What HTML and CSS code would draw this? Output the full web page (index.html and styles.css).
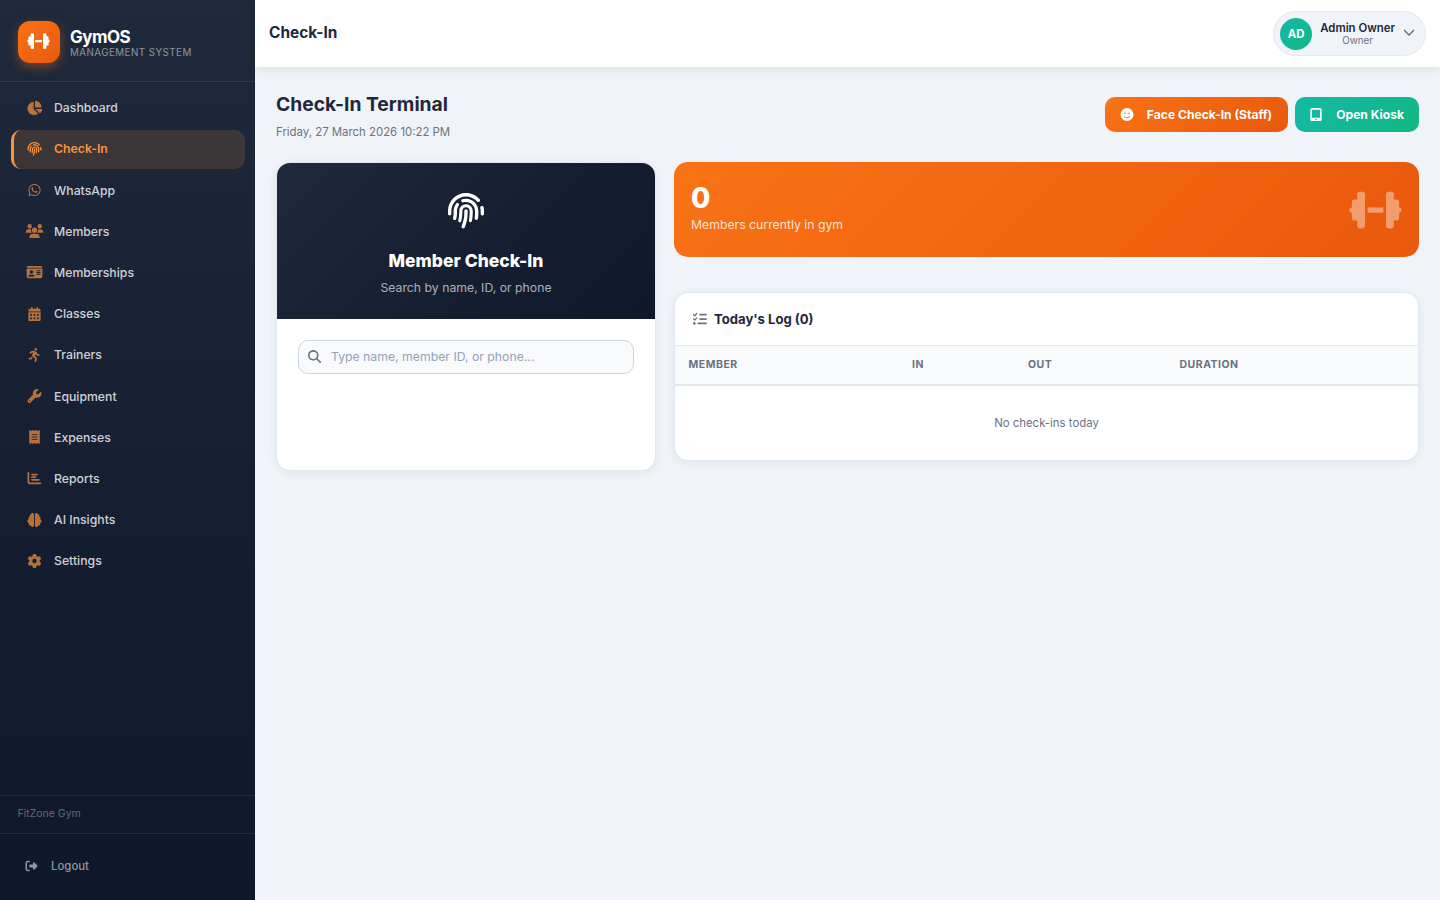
FILE: index.html
```html
<!DOCTYPE html>
<html lang="en">
<head>
    <meta charset="UTF-8">
    <meta name="viewport" content="width=device-width, initial-scale=1.0">
    <title>Check-In - GymOS</title>
    <link rel="stylesheet" href="styles.css">
</head>
<body>
<svg class="icon-sprite" xmlns="http://www.w3.org/2000/svg">
    <symbol id="dumbbell" viewBox="0 0 640 512"><path d="M96 64c0-17.7 14.3-32 32-32h32c17.7 0 32 14.3 32 32V448c0 17.7-14.3 32-32 32H128c-17.7 0-32-14.3-32-32V384H64c-17.7 0-32-14.3-32-32V288c-17.7 0-32-14.3-32-32s14.3-32 32-32V160c0-17.7 14.3-32 32-32H96V64zm448 0v64h32c17.7 0 32 14.3 32 32v64c17.7 0 32 14.3 32 32s-14.3 32-32 32v64c0 17.7-14.3 32-32 32H544v64c0 17.7-14.3 32-32 32H480c-17.7 0-32-14.3-32-32V64c0-17.7 14.3-32 32-32h32c17.7 0 32 14.3 32 32zM416 224v64H224V224H416z"/></symbol>
    <symbol id="chart-pie" viewBox="0 0 576 512"><path d="M304 240V16.6c0-9 7-16.6 16-16.6C443.7 0 544 100.3 544 224c0 9-7.6 16-16.6 16H304zM32 272C32 150.7 122.1 50.3 239 34.3c9.2-1.3 17 6.1 17 15.4V288L412.5 444.5c6.7 6.7 6.2 17.7-1.5 23.1C371.8 495.6 323.8 512 272 512C139.5 512 32 404.6 32 272zm526.4 16c9.3 0 16.6 7.8 15.4 17c-7.7 55.9-34.6 105.6-73.9 142.3c-6 5.6-15.4 5.2-21.2-.7L320 288H558.4z"/></symbol>
    <symbol id="fingerprint" viewBox="0 0 512 512"><path d="M48 256C48 141.1 141.1 48 256 48c63.1 0 119.6 28.1 157.8 72.5c8.6 10.1 23.8 11.2 33.8 2.6s11.2-23.8 2.6-33.8C403.3 34.6 333.7 0 256 0C114.6 0 0 114.6 0 256v40c0 13.3 10.7 24 24 24s24-10.7 24-24V256zm458.5-52.9c-2.7-13-15.5-21.3-28.4-18.5s-21.3 15.5-18.5 28.4c2.9 13.9 4.5 28.3 4.5 43.1v40c0 13.3 10.7 24 24 24s24-10.7 24-24V256c0-18.1-1.9-35.8-5.5-52.9zM256 80c-19 0-37.4 3-54.5 8.6c-15.2 5-18.7 23.7-8.3 35.9c7.1 8.3 18.8 10.8 29.4 7.9c10.6-2.9 21.8-4.4 33.4-4.4c70.7 0 128 57.3 128 128v24.9c0 25.2-1.5 50.3-4.4 75.3c-1.7 14.6 9.4 27.8 24.2 27.8c11.8 0 21.9-8.6 23.3-20.3c3.3-27.4 5-55 5-82.7V256c0-97.2-78.8-176-176-176zM150.7 148.7c-9.1-10.6-25.3-11.4-33.9-.4C93.7 178 80 215.4 80 256v24.9c0 24.2-2.6 48.4-7.8 71.9C68.8 368.4 80.1 384 96.1 384c10.5 0 19.9-7 22.2-17.3c6.4-28.1 9.7-56.8 9.7-85.8V256c0-27.2 8.5-52.4 22.9-73.1c7.2-10.4 8-24.6-.2-34.2zM256 160c-53 0-96 43-96 96v24.9c0 35.9-4.6 71.5-13.8 106.1c-3.8 14.3 6.7 29 21.5 29c9.5 0 17.9-6.2 20.4-15.4c10.5-39 15.9-79.2 15.9-119.7V256c0-28.7 23.3-52 52-52s52 23.3 52 52v24.9c0 36.3-3.5 72.4-10.4 107.9c-2.7 13.9 7.7 27.2 21.8 27.2c10.2 0 19-7 21-17c7.7-38.8 11.6-78.3 11.6-118.1V256c0-53-43-96-96-96zm24 96c0-13.3-10.7-24-24-24s-24 10.7-24 24v24.9c0 59.9-11 119.3-32.5 175.2l-5.9 15.3c-4.8 12.4 1.4 26.3 13.8 31s26.3-1.4 31-13.8l5.9-15.3C267.9 411.9 280 346.7 280 280.9V256z"/></symbol>
    <symbol id="whatsapp" viewBox="0 0 448 512"><path d="M380.9 97.1C339 55.1 283.2 32 223.9 32c-122.4 0-222 99.6-222 222 0 39.1 10.2 77.3 29.6 111L0 480l117.7-30.9c32.4 17.7 68.9 27 106.1 27h.1c122.3 0 224.1-99.6 224.1-222 0-59.3-25.2-115-67.1-157zm-157 341.6c-33.2 0-65.7-8.9-94-25.7l-6.7-4-69.8 18.3L72 359.2l-4.4-7c-18.5-29.4-28.2-63.3-28.2-98.2 0-101.7 82.8-184.5 184.6-184.5 49.3 0 95.6 19.2 130.4 54.1 34.8 34.9 56.2 81.2 56.1 130.5 0 101.8-84.9 184.6-186.6 184.6zm101.2-138.2c-5.5-2.8-32.8-16.2-37.9-18-5.1-1.9-8.8-2.8-12.5 2.8-3.7 5.6-14.3 18-17.6 21.8-3.2 3.7-6.5 4.2-12 1.4-32.6-16.3-54-29.1-75.5-66-5.7-9.8 5.7-9.1 16.3-30.3 1.8-3.7.9-6.9-.5-9.7-1.4-2.8-12.5-30.1-17.1-41.2-4.5-10.8-9.1-9.3-12.5-9.5-3.2-.2-6.9-.2-10.6-.2-3.7 0-9.7 1.4-14.8 6.9-5.1 5.6-19.4 19-19.4 46.3 0 27.3 19.9 53.7 22.6 57.4 2.8 3.7 39.1 59.7 94.8 83.8 35.2 15.2 49 16.5 66.6 13.9 10.7-1.6 32.8-13.4 37.4-26.4 4.6-13 4.6-24.1 3.2-26.4-1.3-2.5-5-3.9-10.5-6.6z"/></symbol>
    <symbol id="users" viewBox="0 0 640 512"><path d="M144 0a80 80 0 1 1 0 160A80 80 0 1 1 144 0zM512 0a80 80 0 1 1 0 160A80 80 0 1 1 512 0zM0 298.7C0 239.8 47.8 192 106.7 192h42.7c15.9 0 31 3.5 44.6 9.7c-1.3 7.2-1.9 14.7-1.9 22.3c0 38.2 16.8 72.5 43.3 96H21.3C9.6 320 0 310.4 0 298.7zM405.3 320c26.6-23.5 42.6-57.8 42.6-96c0-7.6-.7-15-1.9-22.3c13.6-6.3 28.7-9.7 44.6-9.7h42.7C592.2 192 640 239.8 640 298.7c0 11.8-9.6 21.3-21.3 21.3H405.3zM224 224a96 96 0 1 1 192 0 96 96 0 1 1 -192 0zM128 485.3C128 411.7 187.7 352 261.3 352H378.7C452.3 352 512 411.7 512 485.3c0 14.7-11.9 26.7-26.7 26.7H154.7c-14.7 0-26.7-11.9-26.7-26.7z"/></symbol>
    <symbol id="id-card" viewBox="0 0 576 512"><path fill-rule="evenodd" d="M0 96h576c0-35.3-28.7-64-64-64H64C28.7 32 0 60.7 0 96zm0 32V416c0 35.3 28.7 64 64 64H512c35.3 0 64-28.7 64-64V128H0zM64 405.3c0-29.5 23.9-53.3 53.3-53.3H234.7c29.5 0 53.3 23.9 53.3 53.3c0 5.9-4.8 10.7-10.7 10.7H74.7c-5.9 0-10.7-4.8-10.7-10.7zM176 192a64 64 0 1 1 0 128 64 64 0 1 1 0-128zM368 192H496a16 16 0 0 1 0 32H368a16 16 0 0 1 0-32zM368 256H496a16 16 0 0 1 0 32H368a16 16 0 0 1 0-32zM368 320H496a16 16 0 0 1 0 32H368a16 16 0 0 1 0-32z"/></symbol>
    <symbol id="calendar" viewBox="0 0 448 512"><path fill-rule="evenodd" d="M128 0c17.7 0 32 14.3 32 32V64H288V32c0-17.7 14.3-32 32-32s32 14.3 32 32V64h48c26.5 0 48 21.5 48 48v48H0V112C0 85.5 21.5 64 48 64H96V32c0-17.7 14.3-32 32-32zM0 192H448V464c0 26.5-21.5 48-48 48H48c-26.5 0-48-21.5-48-48V192zM64 256v64h64v-64zM192 256v64h64v-64zM320 256v64h64v-64zM64 384v64h64v-64zM192 384v64h64v-64zM320 384v64h64v-64z"/></symbol>
    <symbol id="running" viewBox="0 0 448 512"><path d="M320 48a48 48 0 1 0 -96 0 48 48 0 1 0 96 0zM125.7 175.5c9.9-9.9 23.4-15.5 37.5-15.5c1.9 0 3.8 .1 5.6 .3L137.6 254c-9.3 28 1.7 58.8 26.8 74.5l86.2 53.9-25.4 88.8c-4.9 17 5 34.7 22 39.6s34.7-5 39.6-22l28.7-100.4c5.9-20.6-2.6-42.6-20.7-53.9L238 299l30.9-82.4 5.1 12.3C289 264.7 323.9 288 362.7 288H384c17.7 0 32-14.3 32-32s-14.3-32-32-32H362.7c-12.9 0-24.6-7.8-29.5-19.7l-6.3-15c-14.6-35.1-44.1-61.9-80.5-73.1l-48.7-15c-11.1-3.4-22.7-5.2-34.4-5.2c-31 0-60.8 12.3-82.7 34.3L57.4 153.4c-12.5 12.5-12.5 32.8 0 45.3s32.8 12.5 45.3 0l23.1-23.1zM91.2 352H32c-17.7 0-32 14.3-32 32s14.3 32 32 32h69.6c19 0 36.2-11.2 43.9-28.5L157 361.6l-9.5-6c-17.5-10.9-30.5-26.8-37.9-44.9L91.2 352z"/></symbol>
    <symbol id="wrench" viewBox="0 0 512 512"><path fill-rule="evenodd" d="M352 320c88.4 0 160-71.6 160-160c0-15.3-2.2-30.1-6.2-44.2c-3.1-10.8-16.4-13.2-24.3-5.3l-76.8 76.8c-3 3-7.1 4.7-11.3 4.7H336c-8.8 0-16-7.2-16-16V118.6c0-4.2 1.7-8.3 4.7-11.3l76.8-76.8c7.9-7.9 5.4-21.2-5.3-24.3C382.1 2.2 367.3 0 352 0C263.6 0 192 71.6 192 160c0 19.1 3.4 37.5 9.5 54.5L19.9 396.1C7.2 408.8 0 426.1 0 444.1C0 481.6 30.4 512 67.9 512c18 0 35.3-7.2 48-19.9L297.5 310.5c17 6.2 35.4 9.5 54.5 9.5zM80 408a24 24 0 1 1 0 48 24 24 0 1 1 0-48z"/></symbol>
    <symbol id="receipt" viewBox="0 0 384 512"><path fill-rule="evenodd" d="M14 2.2C22.5-1.7 32.5-.3 39.6 5.8L80 40.4 120.4 5.8c9-7.7 22.3-7.7 31.2 0L192 40.4 232.4 5.8c9-7.7 22.3-7.7 31.2 0L304 40.4 344.4 5.8c7.1-6.1 17.1-7.5 25.6-3.6s14 12.4 14 21.8V488c0 9.4-5.5 17.9-14 21.8s-18.5 2.5-25.6-3.6L304 471.6l-40.4 34.6c-9 7.7-22.3 7.7-31.2 0L192 471.6l-40.4 34.6c-9 7.7-22.3 7.7-31.2 0L80 471.6 39.6 506.2c-7.1 6.1-17.1 7.5-25.6 3.6S0 497.4 0 488V24C0 14.6 5.5 6.1 14 2.2zM96 144a16 16 0 0 0 0 32H288a16 16 0 0 0 0-32zM96 240a16 16 0 0 0 0 32H288a16 16 0 0 0 0-32zM96 336a16 16 0 0 0 0 32H288a16 16 0 0 0 0-32z"/></symbol>
    <symbol id="chart-bar" viewBox="0 0 512 512"><path d="M32 32c17.7 0 32 14.3 32 32V400c0 8.8 7.2 16 16 16H480c17.7 0 32 14.3 32 32s-14.3 32-32 32H80c-44.2 0-80-35.8-80-80V64C0 46.3 14.3 32 32 32zm96 96c0-17.7 14.3-32 32-32h192c17.7 0 32 14.3 32 32s-14.3 32-32 32h-192c-17.7 0-32-14.3-32-32zm32 64H288c17.7 0 32 14.3 32 32s-14.3 32-32 32H160c-17.7 0-32-14.3-32-32s14.3-32 32-32zm0 96H416c17.7 0 32 14.3 32 32s-14.3 32-32 32H160c-17.7 0-32-14.3-32-32s14.3-32 32-32z"/></symbol>
    <symbol id="brain" viewBox="0 0 512 512"><path d="M184 0c30.9 0 56 25.1 56 56V456c0 30.9-25.1 56-56 56c-28.9 0-52.7-21.9-55.7-50.1c-5.2 1.4-10.7 2.1-16.3 2.1c-35.3 0-64-28.7-64-64c0-7.4 1.3-14.6 3.6-21.2C21.4 367.4 0 338.2 0 304c0-31.9 18.7-59.5 45.8-72.3C37.1 220.8 32 207 32 192c0-30.7 21.6-56.3 50.4-62.6C80.8 123.9 80 118 80 112c0-29.9 20.6-55.1 48.3-62.1C131.3 21.9 155.1 0 184 0zM328 0c28.9 0 52.6 21.9 55.7 49.9c27.8 7 48.3 32.1 48.3 62.1c0 6-.8 11.9-2.4 17.4c28.8 6.2 50.4 31.9 50.4 62.6c0 15-5.1 28.8-13.8 39.7C493.3 244.5 512 272.1 512 304c0 34.2-21.4 63.4-51.6 74.8c2.3 6.6 3.6 13.8 3.6 21.2c0 35.3-28.7 64-64 64c-5.6 0-11.1-.7-16.3-2.1c-3 28.2-26.8 50.1-55.7 50.1c-30.9 0-56-25.1-56-56V56c0-30.9 25.1-56 56-56z"/></symbol>
    <symbol id="gear" viewBox="0 0 512 512"><path fill-rule="evenodd" d="M495.9 166.6c3.2 8.7 .5 18.4-6.4 24.6l-43.3 39.4c1.1 8.3 1.7 16.8 1.7 25.4s-.6 17.1-1.7 25.4l43.3 39.4c6.9 6.2 9.6 15.9 6.4 24.6c-4.4 11.9-9.7 23.3-15.8 34.3l-4.7 8.1c-6.6 11-14 21.4-22.1 31.2c-5.9 7.2-15.7 9.6-24.5 6.8l-55.7-17.7c-13.4 10.3-28.2 18.9-44 25.4l-12.5 57.1c-2 9.1-9 16.3-18.2 17.8c-13.8 2.3-28 3.5-42.5 3.5s-28.7-1.2-42.5-3.5c-9.2-1.5-16.2-8.7-18.2-17.8l-12.5-57.1c-15.8-6.5-30.6-15.1-44-25.4L83.1 425.9c-8.8 2.8-18.6 .3-24.5-6.8c-8.1-9.8-15.5-20.2-22.1-31.2l-4.7-8.1c-6.1-11-11.4-22.4-15.8-34.3c-3.2-8.7-.5-18.4 6.4-24.6l43.3-39.4C64.6 273.1 64 264.6 64 256s.6-17.1 1.7-25.4L22.4 191.2c-6.9-6.2-9.6-15.9-6.4-24.6c4.4-11.9 9.7-23.3 15.8-34.3l4.7-8.1c6.6-11 14-21.4 22.1-31.2c5.9-7.2 15.7-9.6 24.5-6.8l55.7 17.7c13.4-10.3 28.2-18.9 44-25.4l12.5-57.1c2-9.1 9-16.3 18.2-17.8C227.3 1.2 241.5 0 256 0s28.7 1.2 42.5 3.5c9.2 1.5 16.2 8.7 18.2 17.8l12.5 57.1c15.8 6.5 30.6 15.1 44 25.4l55.7-17.7c8.8-2.8 18.6-.3 24.5 6.8c8.1 9.8 15.5 20.2 22.1 31.2l4.7 8.1c6.1 11 11.4 22.4 15.8 34.3zM256 336a80 80 0 1 0 0-160 80 80 0 1 0 0 160z"/></symbol>
    <symbol id="logout" viewBox="0 0 512 512"><path d="M377.9 105.9L500.7 228.7c7.2 7.2 11.3 17.1 11.3 27.3s-4.1 20.1-11.3 27.3L377.9 406.1c-6.4 6.4-15 9.9-24 9.9c-18.7 0-33.9-15.2-33.9-33.9v-62.1h-128c-17.7 0-32-14.3-32-32v-64c0-17.7 14.3-32 32-32h128v-62.1c0-18.7 15.2-33.9 33.9-33.9c9 0 17.6 3.6 24 9.9zM160 96H96c-17.7 0-32 14.3-32 32v256c0 17.7 14.3 32 32 32h64c17.7 0 32 14.3 32 32s-14.3 32-32 32H96c-53 0-96-43-96-96V128C0 75 43 32 96 32h64c17.7 0 32 14.3 32 32s-14.3 32-32 32z"/></symbol>
    <symbol id="chevron-down" viewBox="0 0 512 512"><path d="M233.4 406.6c12.5 12.5 32.8 12.5 45.3 0l192-192c12.5-12.5 12.5-32.8 0-45.3s-32.8-12.5-45.3 0L256 338.7 86.6 169.4c-12.5-12.5-32.8-12.5-45.3 0s-12.5 32.8 0 45.3l192 192z"/></symbol>
    <symbol id="smile" viewBox="0 0 512 512"><path fill-rule="evenodd" d="M256 512A256 256 0 1 0 256 0a256 256 0 1 0 0 512zM164.1 325.5C182 346.2 212.6 368 256 368s74-21.8 91.9-42.5c5.8-6.7 15.9-7.4 22.6-1.6s7.4 15.9 1.6 22.6C349.8 372.1 311.1 400 256 400s-93.8-27.9-116.1-53.5c-5.8-6.7-5.1-16.8 1.6-22.6s16.8-5.1 22.6 1.6zM144.4 208a32 32 0 1 1 64 0 32 32 0 1 1 -64 0zm192-32a32 32 0 1 1 0 64 32 32 0 1 1 0-64z"/></symbol>
    <symbol id="tablet" viewBox="0 0 448 512"><path fill-rule="evenodd" d="M0 64C0 28.7 28.7 0 64 0H384c35.3 0 64 28.7 64 64V448c0 35.3-28.7 64-64 64H64c-35.3 0-64-28.7-64-64V64zM256 448a32 32 0 1 0 -64 0 32 32 0 1 0 64 0zM384 64H64V384H384V64z"/></symbol>
    <symbol id="search" viewBox="0 0 512 512"><path fill-rule="evenodd" d="M416 208c0 45.9-14.9 88.3-40 122.7L502.6 457.4c12.5 12.5 12.5 32.8 0 45.3s-32.8 12.5-45.3 0L330.7 376c-34.4 25.2-76.8 40-122.7 40C93.1 416 0 322.9 0 208S93.1 0 208 0S416 93.1 416 208zM208 352a144 144 0 1 0 0-288 144 144 0 1 0 0 288z"/></symbol>
    <symbol id="list-check" viewBox="0 0 512 512"><path d="M152.1 38.2c9.9 8.9 10.7 24 1.8 33.9l-72 80c-4.4 4.9-10.6 7.8-17.2 7.9s-12.9-2.4-17.6-7L7 113C-2.3 103.6-2.3 88.4 7 79s24.6-9.4 33.9 0l22.1 22.1 55.1-61.2c8.9-9.9 24-10.7 33.9-1.8zm0 160c9.9 8.9 10.7 24 1.8 33.9l-72 80c-4.4 4.9-10.6 7.8-17.2 7.9s-12.9-2.4-17.6-7L7 273c-9.4-9.4-9.4-24.6 0-33.9s24.6-9.4 33.9 0l22.1 22.1 55.1-61.2c8.9-9.9 24-10.7 33.9-1.8zM224 96c0-17.7 14.3-32 32-32H480c17.7 0 32 14.3 32 32s-14.3 32-32 32H256c-17.7 0-32-14.3-32-32zm0 160c0-17.7 14.3-32 32-32H480c17.7 0 32 14.3 32 32s-14.3 32-32 32H256c-17.7 0-32-14.3-32-32zM160 416c0-17.7 14.3-32 32-32H480c17.7 0 32 14.3 32 32s-14.3 32-32 32H192c-17.7 0-32-14.3-32-32zM48 368a48 48 0 1 1 0 96 48 48 0 1 1 0-96z"/></symbol>
</svg>

<aside class="sidebar">
    <div class="brand">
        <div class="brand-icon"><svg class="icon"><use href="#dumbbell"/></svg></div>
        <div class="brand-text">
            <div class="brand-name">GymOS</div>
            <div class="brand-sub">Management System</div>
        </div>
    </div>
    <nav class="nav">
        <a class="nav-link"><svg class="icon"><use href="#chart-pie"/></svg>Dashboard</a>
        <a class="nav-link active"><svg class="icon"><use href="#fingerprint"/></svg>Check-In</a>
        <a class="nav-link"><svg class="icon"><use href="#whatsapp"/></svg>WhatsApp</a>
        <a class="nav-link"><svg class="icon"><use href="#users"/></svg>Members</a>
        <a class="nav-link"><svg class="icon"><use href="#id-card"/></svg>Memberships</a>
        <a class="nav-link"><svg class="icon"><use href="#calendar"/></svg>Classes</a>
        <a class="nav-link"><svg class="icon"><use href="#running"/></svg>Trainers</a>
        <a class="nav-link"><svg class="icon"><use href="#wrench"/></svg>Equipment</a>
        <a class="nav-link"><svg class="icon"><use href="#receipt"/></svg>Expenses</a>
        <a class="nav-link"><svg class="icon"><use href="#chart-bar"/></svg>Reports</a>
        <a class="nav-link"><svg class="icon"><use href="#brain"/></svg>AI Insights</a>
        <a class="nav-link"><svg class="icon"><use href="#gear"/></svg>Settings</a>
    </nav>
    <div class="gym-name">FitZone Gym</div>
    <div class="sidebar-footer">
        <a class="logout"><svg class="icon"><use href="#logout"/></svg>Logout</a>
    </div>
</aside>

<div class="main">
    <header class="topbar">
        <div class="topbar-title">Check-In</div>
        <button class="user-menu" type="button">
            <span class="avatar">AD</span>
            <span class="user-info">
                <span class="user-name">Admin Owner</span>
                <span class="user-role">Owner</span>
            </span>
            <svg class="icon"><use href="#chevron-down"/></svg>
        </button>
    </header>

    <main class="content">
        <div class="page-header">
            <div>
                <h1>Check-In Terminal</h1>
                <p class="page-date">Friday, 27 March 2026 10:22 PM</p>
            </div>
            <div class="page-actions">
                <a class="btn btn-primary"><svg class="icon"><use href="#smile"/></svg>Face Check-In (Staff)</a>
                <a class="btn btn-success"><svg class="icon"><use href="#tablet"/></svg>Open Kiosk</a>
            </div>
        </div>

        <div class="columns">
            <section class="card checkin-card">
                <div class="checkin-head">
                    <svg class="icon"><use href="#fingerprint"/></svg>
                    <h2>Member Check-In</h2>
                    <p>Search by name, ID, or phone</p>
                </div>
                <div class="checkin-body">
                    <div class="search-box">
                        <svg class="icon"><use href="#search"/></svg>
                        <input type="text" placeholder="Type name, member ID, or phone...">
                    </div>
                </div>
            </section>

            <div>
                <section class="occupancy">
                    <div>
                        <div class="occupancy-count">0</div>
                        <div class="occupancy-label">Members currently in gym</div>
                    </div>
                    <svg class="icon"><use href="#dumbbell"/></svg>
                </section>

                <section class="card">
                    <div class="card-title"><svg class="icon"><use href="#list-check"/></svg>Today's Log (0)</div>
                    <table class="log-table">
                        <thead>
                        <tr>
                            <th class="col-member">Member</th>
                            <th class="col-in">In</th>
                            <th class="col-out">Out</th>
                            <th>Duration</th>
                        </tr>
                        </thead>
                        <tbody>
                        <tr>
                            <td colspan="4" class="empty">No check-ins today</td>
                        </tr>
                        </tbody>
                    </table>
                </section>
            </div>
        </div>
    </main>
</div>
</body>
</html>
```
FILE: styles.css
```css
* {
    margin: 0;
    padding: 0;
    box-sizing: border-box;
    font-family: Inter, sans-serif;
}

body {
    display: flex;
    height: 100vh;
    overflow: hidden;
    background: #f0f4f8;
    color: #1e293b;
    font-size: 12.25px;
}

.icon-sprite {
    display: none;
}

.icon {
    display: block;
    flex: none;
    fill: currentColor;
}

/* Sidebar */
.sidebar {
    display: flex;
    flex-direction: column;
    flex: none;
    width: 255px;
    height: 100vh;
    background: linear-gradient(180deg, #1e293b 0%, #0f172a 100%);
}

.brand {
    display: flex;
    align-items: center;
    gap: 10px;
    height: 82px;
    padding: 2px 18px 0;
    border-bottom: 1px solid rgba(255,255,255,0.08);
}

.brand-icon {
    display: flex;
    align-items: center;
    justify-content: center;
    width: 42px;
    height: 42px;
    padding: 0 2px 2px 0;
    border-radius: 12px;
    background: linear-gradient(135deg, #f97316, #ea580c);
    box-shadow: 0 4px 12px rgba(249,115,22,0.4);
    color: white;
}

.brand-icon .icon {
    width: 23px;
    height: 18px;
}

.brand-text {
    padding-top: 1px;
}

.brand-name {
    color: white;
    font-size: 17px;
    font-weight: 700;
    line-height: 20px;
    letter-spacing: -0.5px;
}

.brand-sub {
    color: rgba(255,255,255,0.5);
    font-size: 9.8px;
    line-height: 11px;
    letter-spacing: 0.45px;
    text-transform: uppercase;
}

.nav {
    display: flex;
    flex-direction: column;
    flex: 1;
    gap: 2.2px;
    padding: 6.6px 10px 0 11px;
}

.nav-link {
    display: flex;
    align-items: center;
    gap: 10px;
    height: 39px;
    padding: 0 0 0.8px 11px;
    border-left: 3px solid transparent;
    border-radius: 10px;
    color: rgba(255,255,255,0.8);
    font-weight: 500;
}

.nav-link .icon {
    width: 19px;
    height: 14px;
    color: #fb923c;
    opacity: 0.7;
}

.nav-link.active {
    background: rgba(251,146,60,0.15);
    border-left-color: #fb923c;
    color: #fb923c;
    font-weight: 600;
}

.nav-link.active .icon {
    opacity: 1;
}

.gym-name {
    height: 38px;
    padding: 11px 17.5px;
    border-top: 1px solid rgba(255,255,255,0.08);
    color: rgba(255,255,255,0.35);
    font-size: 10.5px;
    line-height: 14px;
}

.sidebar-footer {
    height: 67px;
    padding: 12px 25px;
    border-top: 1px solid rgba(255,255,255,0.08);
}

.logout {
    display: flex;
    align-items: center;
    gap: 13px;
    height: 39px;
    color: rgba(255,255,255,0.55);
    font-size: 11.4px;
    font-weight: 500;
}

.logout .icon {
    width: 13px;
    height: 12px;
}

/* Main area */
.main {
    flex: 1;
    min-width: 0;
}

.topbar {
    position: relative;
    display: flex;
    align-items: center;
    justify-content: space-between;
    height: 67px;
    padding: 0 14px;
    background: white;
    box-shadow: 0 1px 12px rgba(15,23,42,0.1);
}

.topbar-title {
    font-size: 15.4px;
    font-weight: 700;
    line-height: 20px;
    padding-bottom: 2px;
}

.user-menu {
    display: flex;
    align-items: center;
    gap: 8px;
    height: 45px;
    padding: 0 10px 0 6px;
    background: #f0f4f8;
    border: 1px solid #e2e8f0;
    border-radius: 50px;
    color: #1e293b;
}

.user-menu .icon {
    width: 12px;
    height: 12px;
    margin-bottom: 4px;
    color: #64748b;
}

.avatar {
    width: 32px;
    border-radius: 50%;
    background: linear-gradient(135deg, #14b8a6, #10b981);
    color: white;
    font-size: 11.4px;
    font-weight: 700;
    line-height: 32px;
}

.user-name,
.user-role {
    display: block;
}

.user-name {
    font-size: 11.4px;
    font-weight: 600;
    line-height: 14px;
}

.user-role {
    color: #6b7280;
    font-size: 9.8px;
    line-height: 12px;
}

.content {
    padding: 25px 21px;
}

.page-header {
    display: flex;
    justify-content: space-between;
    margin-bottom: 22px;
}

h1 {
    font-size: 19.25px;
    font-weight: 700;
    line-height: 24px;
}

.page-date {
    margin-top: 8px;
    color: #6b7280;
    font-size: 11.4px;
    line-height: 16px;
}

.page-actions {
    display: flex;
    gap: 7px;
    padding-top: 5px;
}

.btn {
    display: flex;
    align-items: center;
    gap: 13px;
    height: 35px;
    border-radius: 10px;
    color: white;
    font-size: 12.1px;
    font-weight: 700;
}

.btn .icon {
    width: 14px;
    height: 13px;
}

.btn-primary {
    padding: 0 16px 0 15px;
    background: linear-gradient(135deg, #f97316, #ea580c);
}

.btn-success {
    padding: 0 15px 0 14px;
    background: linear-gradient(135deg, #14b8a6, #10b981);
}

.columns {
    display: grid;
    grid-template-columns: 380px 1fr;
    align-items: start;
    gap: 18px;
}

.card {
    overflow: hidden;
    background: white;
    border: 1px solid #e2e8f0;
    border-radius: 14px;
    box-shadow: 0 2px 10px rgba(15,23,42,0.07);
}

.checkin-card {
    height: 309px;
}

.checkin-head {
    display: flex;
    flex-direction: column;
    align-items: center;
    height: 156px;
    padding-top: 30px;
    background: linear-gradient(135deg, #1e293b, #0f172a);
    color: white;
}

.checkin-head .icon {
    width: 36px;
    height: 36px;
}

.checkin-head h2 {
    margin-top: 21px;
    font-size: 17.5px;
    font-weight: 800;
    line-height: 22px;
}

.checkin-head p {
    margin-top: 8px;
    color: rgba(255,255,255,0.65);
    font-size: 12.25px;
    line-height: 16px;
}

.checkin-body {
    padding: 21px;
}

.search-box {
    display: flex;
    align-items: center;
    gap: 10px;
    height: 34px;
    padding: 0 9px 1px;
    background: #f8fafc;
    border: 1px solid #cbd5e1;
    border-radius: 10px;
}

.search-box .icon {
    width: 13px;
    height: 13px;
    color: #6b7280;
}

.search-box input {
    flex: 1;
    border: none;
    outline: none;
    background: transparent;
    font-size: 12.25px;
}

.search-box input::placeholder {
    color: #94a3b8;
}

.occupancy {
    display: flex;
    align-items: center;
    justify-content: space-between;
    height: 95px;
    margin-bottom: 35px;
    padding: 0 17px;
    border-radius: 14px;
    background: linear-gradient(135deg, #f97316, #ea580c);
    color: white;
}

.occupancy-count {
    font-size: 28px;
    font-weight: 800;
    line-height: 28px;
}

.occupancy-label {
    margin: 3px 0 1px;
    font-size: 12.25px;
    line-height: 19px;
    opacity: 0.8;
}

.occupancy .icon {
    width: 53px;
    height: 42px;
    opacity: 0.4;
}

.card-title {
    display: flex;
    align-items: center;
    gap: 7px;
    height: 52px;
    padding-left: 18px;
    font-size: 13.1px;
    font-weight: 700;
}

.card-title .icon {
    width: 14px;
    height: 14px;
    color: #6b7280;
}

.log-table {
    width: 100%;
    border-collapse: separate;
    border-spacing: 0;
    table-layout: fixed;
}

.log-table th {
    height: 41px;
    padding: 0 0 1px 13.5px;
    background: #f8fafc;
    border-top: 1px solid #e2e8f0;
    border-bottom: 2px solid #e2e8f0;
    color: #6b7280;
    font-size: 10.5px;
    font-weight: 700;
    letter-spacing: 0.5px;
    text-align: left;
    text-transform: uppercase;
}

.col-member {
    width: 223.5px;
}

.col-in {
    width: 116px;
}

.col-out {
    width: 151.5px;
}

.empty {
    height: 74px;
    color: #6b7280;
    font-size: 11.4px;
    text-align: center;
}
```
